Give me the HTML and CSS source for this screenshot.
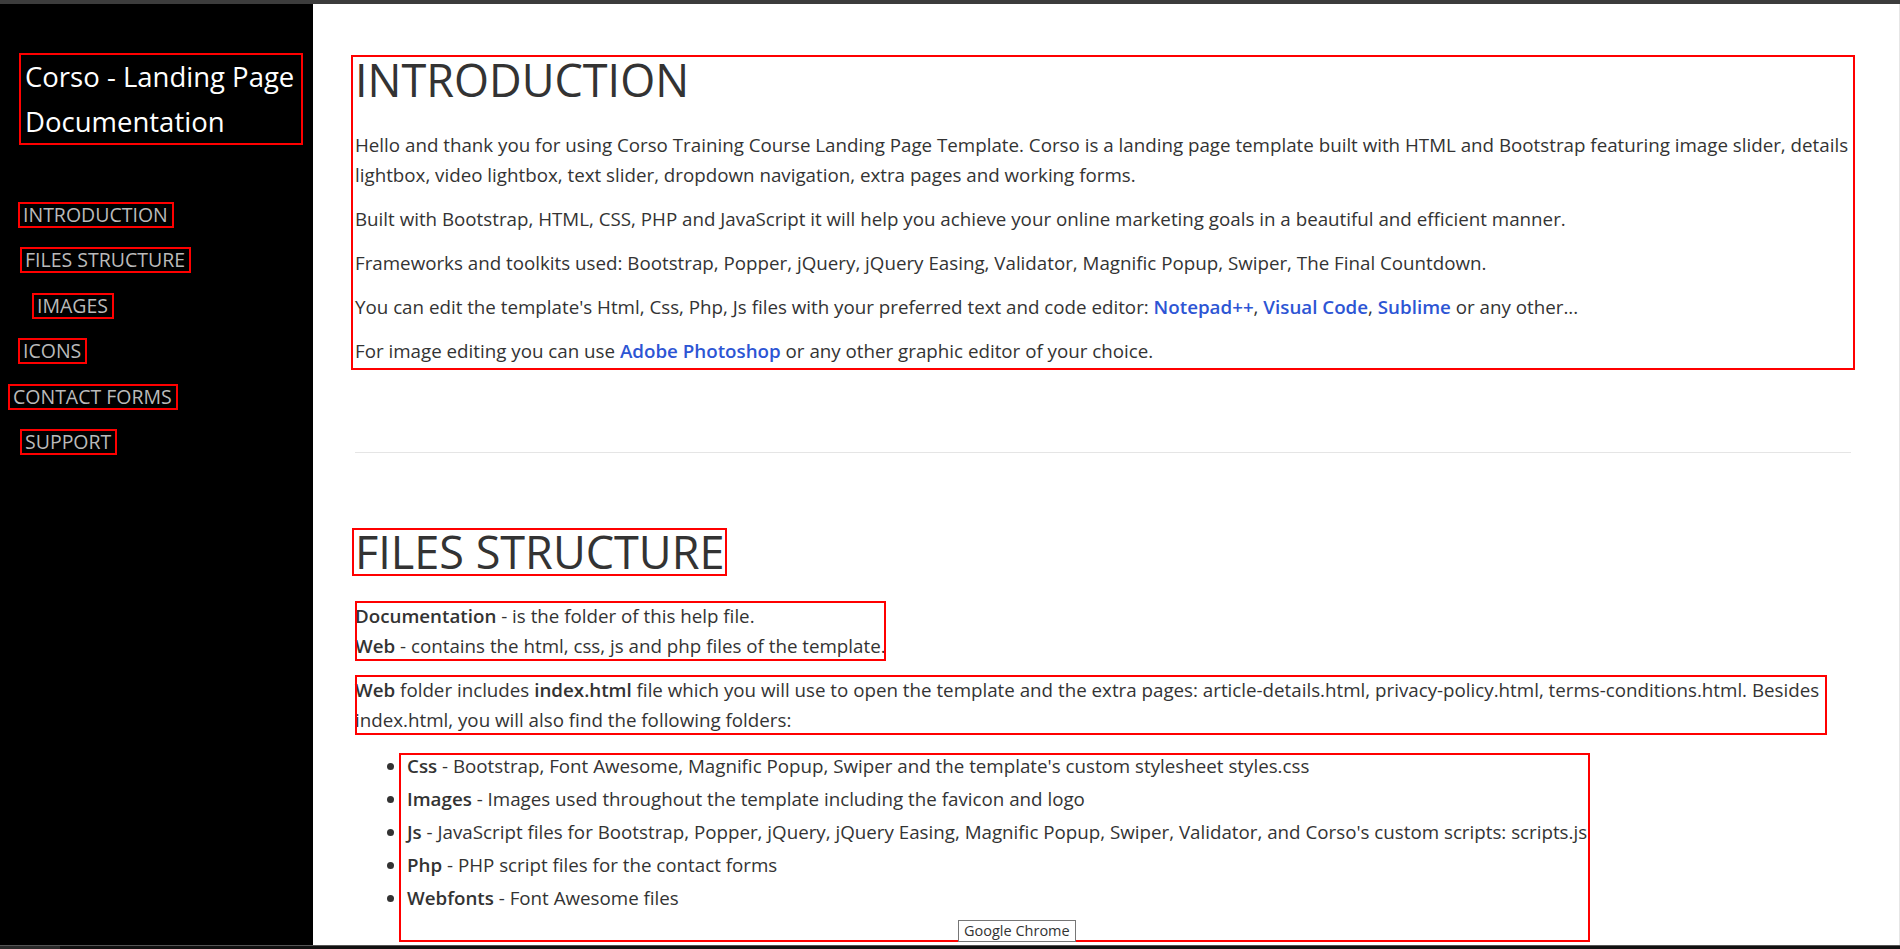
FILE: index.html
```html
<!DOCTYPE html>
<html lang="en">
<head>
<meta charset="utf-8">
<title>Corso - Landing Page Documentation</title>
<link rel="stylesheet" href="styles.css">
</head>
<body>
<div class="window">
  <div class="topbar"></div>
  <div class="app">
    <aside class="sidebar">
      <div class="brand">Corso - Landing Page Documentation</div>
      <nav class="nav">
        <a class="nav-link" href="#introduction">INTRODUCTION</a>
        <a class="nav-link nav-link--shift" href="#files">FILES STRUCTURE</a>
        <a class="nav-link nav-link--sub" href="#images">IMAGES</a>
        <a class="nav-link" href="#icons">ICONS</a>
        <a class="nav-link nav-link--flush" href="#contact">CONTACT FORMS</a>
        <a class="nav-link nav-link--shift" href="#support">SUPPORT</a>
      </nav>
    </aside>
    <main class="content">
      <section class="intro box" id="introduction">
        <h1 class="section-title">INTRODUCTION</h1>
        <p>Hello and thank you for using Corso Training Course Landing Page Template. Corso is a landing page template built with HTML and Bootstrap featuring image slider, details lightbox, video lightbox, text slider, dropdown navigation, extra pages and working forms.</p>
        <p>Built with Bootstrap, HTML, CSS, PHP and JavaScript it will help you achieve your online marketing goals in a beautiful and efficient manner.</p>
        <p>Frameworks and toolkits used: Bootstrap, Popper, jQuery, jQuery Easing, Validator, Magnific Popup, Swiper, The Final Countdown.</p>
        <p>You can edit the template's Html, Css, Php, Js files with your preferred text and code editor: <a class="link" href="#">Notepad++</a>, <a class="link" href="#">Visual Code</a>, <a class="link" href="#">Sublime</a> or any other...</p>
        <p>For image editing you can use <a class="link" href="#">Adobe Photoshop</a> or any other graphic editor of your choice.</p>
      </section>
      <hr class="divider">
      <section class="files" id="files">
        <h1 class="section-title section-title--boxed box">FILES STRUCTURE</h1>
        <p class="fit box"><strong>Documentation</strong> - is the folder of this help file.<br><strong>Web</strong> - contains the html, css, js and php files of the template.</p>
        <p class="fit fit--wide box"><strong>Web</strong> folder includes <strong>index.html</strong> file which you will use to open the template and the extra pages: article-details.html, privacy-policy.html, terms-conditions.html. Besides index.html, you will also find the following folders:</p>
        <ul class="folders box">
          <li><strong>Css</strong> - Bootstrap, Font Awesome, Magnific Popup, Swiper and the template's custom stylesheet styles.css</li>
          <li><strong>Images</strong> - Images used throughout the template including the favicon and logo</li>
          <li><strong>Js</strong> - JavaScript files for Bootstrap, Popper, jQuery, jQuery Easing, Magnific Popup, Swiper, Validator, and Corso's custom scripts: scripts.js</li>
          <li><strong>Php</strong> - PHP script files for the contact forms</li>
          <li><strong>Webfonts</strong> - Font Awesome files</li>
        </ul>
      </section>
      <div class="tooltip">Google Chrome</div>
    </main>
  </div>
  <div class="taskbar">
    <span class="taskbar-item taskbar-item--start"></span>
  </div>
</div>
</body>
</html>
```

FILE: styles.css
```css
* {
  box-sizing: border-box;
}

html,
body {
  margin: 0;
  padding: 0;
}

body {
  width: 1900px;
  height: 949px;
  overflow: hidden;
  font-family: "Open Sans", "Liberation Sans", sans-serif;
  color: #333;
  background: #fff;
}

.window {
  display: flex;
  flex-direction: column;
  height: 949px;
}

.topbar {
  height: 4px;
  flex: none;
  background: #3c3c3c;
}

.app {
  flex: 1;
  display: flex;
  min-height: 0;
}

.sidebar {
  width: 313px;
  flex: none;
  background: #000;
  padding: 50px 11px 0 20px;
}

.brand {
  font-size: 27.5px;
  line-height: 45px;
  color: #fff;
  padding-left: 5px;
  outline: 2px solid #f00;
  outline-offset: -1px;
}

.nav {
  display: flex;
  flex-direction: column;
  align-items: flex-start;
  gap: 23.4px;
  margin-top: 60px;
}

.nav-link {
  display: inline-block;
  font-size: 19.5px;
  line-height: 22px;
  color: #bababa;
  text-decoration: none;
  padding: 0 4px 0 3px;
  outline: 2px solid #f00;
}

.nav-link--shift {
  margin-left: 2px;
}

.nav-link--sub {
  margin-left: 14px;
}

.nav-link--flush {
  margin-left: -10px;
}

.content {
  flex: 1;
  position: relative;
  overflow: hidden;
  padding: 55px 48px 0 42px;
  border-right: 1px solid #e6e6e6;
}

.box {
  outline: 2px solid #f00;
}

.intro {
  outline-offset: 2px;
}

.section-title {
  font-size: 45px;
  font-weight: 400;
  line-height: 42px;
  margin: 0 0 28.7px;
  color: #333;
}

.section-title--boxed {
  width: fit-content;
  outline-offset: 1px;
}

p {
  font-size: 18.75px;
  line-height: 30px;
  margin: 0 0 14px;
}

.intro p:last-child {
  margin-bottom: 0;
}

strong {
  font-weight: 600;
}

.link {
  color: #2d55d4;
  font-weight: 600;
  text-decoration: none;
}

.divider {
  border: 0;
  border-top: 1px solid #e5e5e5;
  margin: 86px 0 78px;
}

.fit {
  width: fit-content;
  outline-offset: -2px;
}

.fit--wide {
  max-width: 1472px;
}

.folders {
  width: fit-content;
  margin: 0 0 0 40px;
  padding: 0 7px 32px 12px;
  list-style: disc outside;
  font-size: 18.75px;
  outline-offset: -6px;
}

.folders li {
  line-height: 33px;
}

.tooltip {
  position: absolute;
  left: 645px;
  top: 916px;
  width: 118px;
  height: 22px;
  border: 1px solid #767676;
  background: #fff;
  font-size: 14.5px;
  line-height: 20px;
  color: #333;
  padding: 0 5px;
  white-space: nowrap;
}

.taskbar {
  height: 4px;
  flex: none;
  display: flex;
  background: #111;
  border-top: 1px solid #555;
}

.taskbar-item {
  height: 100%;
}

.taskbar-item--start {
  width: 60px;
  background: #2a2a2a;
}
```
